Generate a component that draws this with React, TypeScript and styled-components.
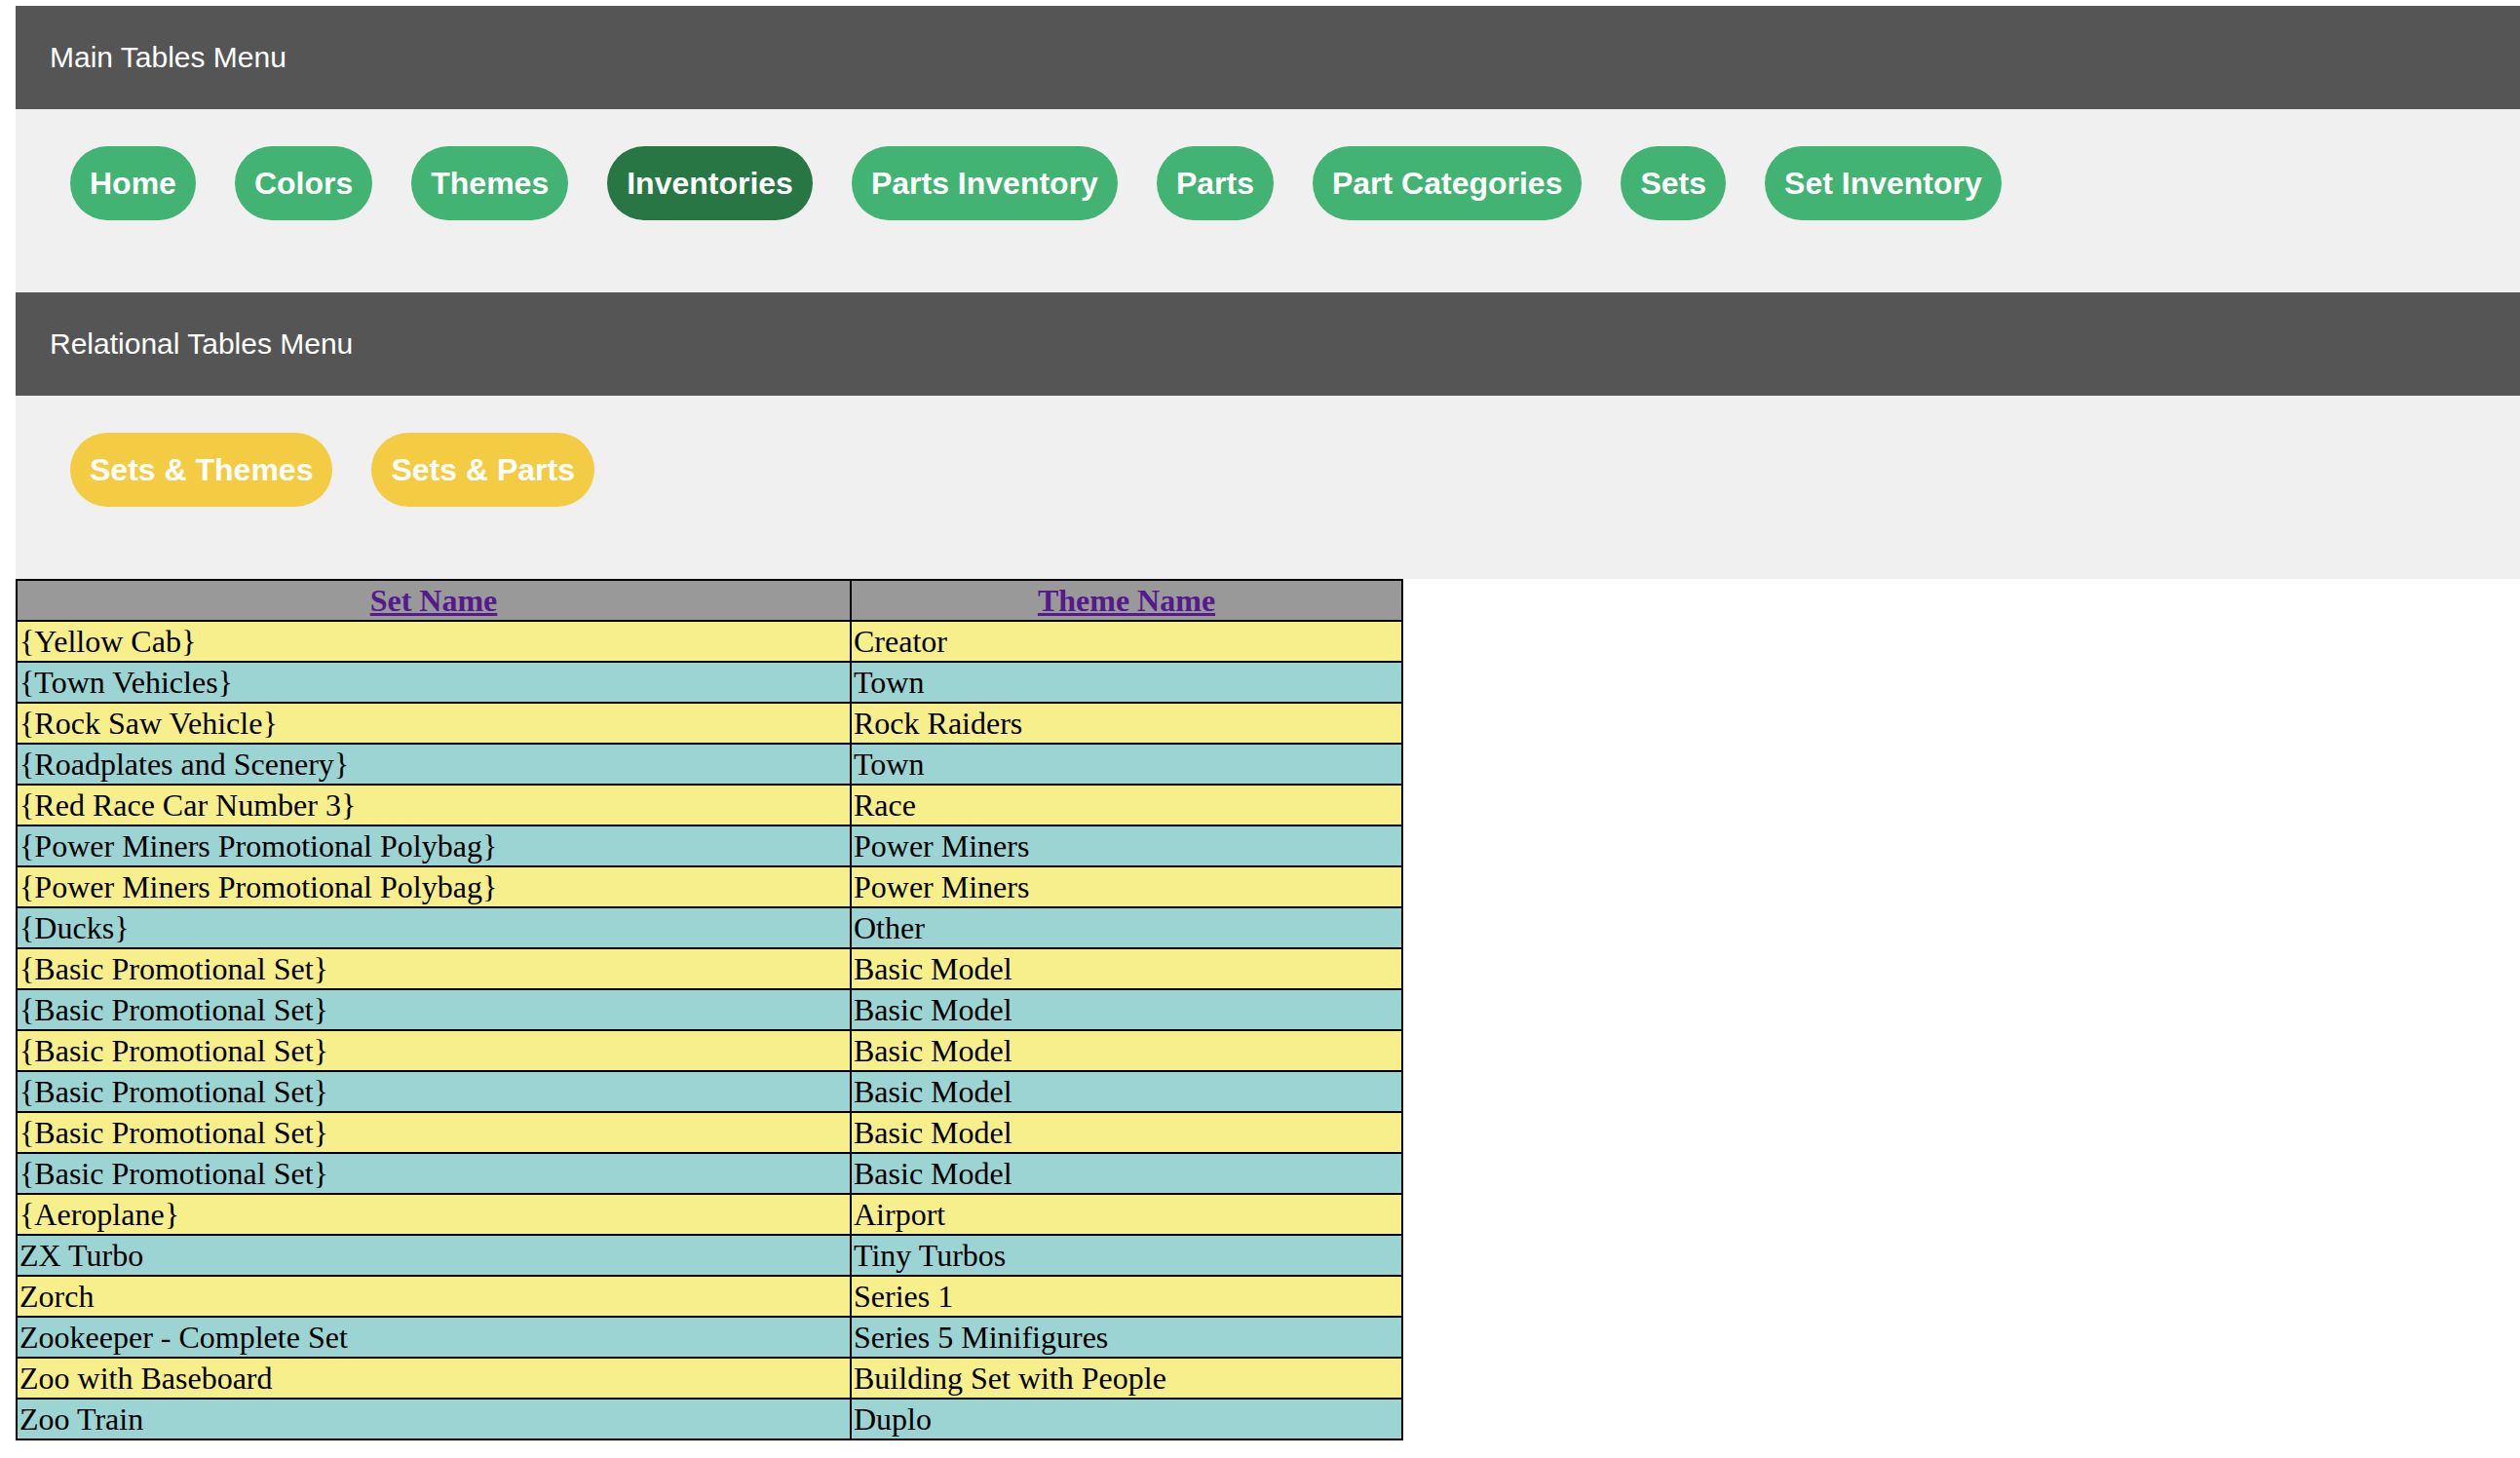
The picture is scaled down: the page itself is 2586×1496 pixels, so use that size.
import React from 'react'
import styled, { createGlobalStyle, css } from 'styled-components'

type Tone = 'green' | 'active' | 'yellow'

const mainLinks: { label: string; tone: Tone }[] = [
  { label: 'Home', tone: 'green' },
  { label: 'Colors', tone: 'green' },
  { label: 'Themes', tone: 'green' },
  { label: 'Inventories', tone: 'active' },
  { label: 'Parts Inventory', tone: 'green' },
  { label: 'Parts', tone: 'green' },
  { label: 'Part Categories', tone: 'green' },
  { label: 'Sets', tone: 'green' },
  { label: 'Set Inventory', tone: 'green' },
]

const relLinks = ['Sets & Themes', 'Sets & Parts']

const rows: [string, string][] = [
  ['{Yellow Cab}', 'Creator'],
  ['{Town Vehicles}', 'Town'],
  ['{Rock Saw Vehicle}', 'Rock Raiders'],
  ['{Roadplates and Scenery}', 'Town'],
  ['{Red Race Car Number 3}', 'Race'],
  ['{Power Miners Promotional Polybag}', 'Power Miners'],
  ['{Power Miners Promotional Polybag}', 'Power Miners'],
  ['{Ducks}', 'Other'],
  ['{Basic Promotional Set}', 'Basic Model'],
  ['{Basic Promotional Set}', 'Basic Model'],
  ['{Basic Promotional Set}', 'Basic Model'],
  ['{Basic Promotional Set}', 'Basic Model'],
  ['{Basic Promotional Set}', 'Basic Model'],
  ['{Basic Promotional Set}', 'Basic Model'],
  ['{Aeroplane}', 'Airport'],
  ['ZX Turbo', 'Tiny Turbos'],
  ['Zorch', 'Series 1'],
  ['Zookeeper - Complete Set', 'Series 5 Minifigures'],
  ['Zoo with Baseboard', 'Building Set with People'],
  ['Zoo Train', 'Duplo'],
]

const App = () => {
  return (
    <>
      <GlobalStyle />
      <Page>
        <MenuHeader>Main Tables Menu</MenuHeader>
        <MenuPanel>
          {mainLinks.map((l) => (
            <PillButton key={l.label} $tone={l.tone}>{l.label}</PillButton>
          ))}
        </MenuPanel>
        <MenuHeader>Relational Tables Menu</MenuHeader>
        <MenuPanel>
          {relLinks.map((l) => (
            <PillButton key={l} $tone="yellow">{l}</PillButton>
          ))}
        </MenuPanel>
        <DataTable>
          <thead>
            <tr>
              <HeadCell $w={850}><SortLink href="#">Set Name</SortLink></HeadCell>
              <HeadCell><SortLink href="#">Theme Name</SortLink></HeadCell>
            </tr>
          </thead>
          <tbody>
            {rows.map(([set, theme], i) => (
              <Row key={i} $alt={i % 2 === 1}>
                <Cell>{set}</Cell>
                <Cell>{theme}</Cell>
              </Row>
            ))}
          </tbody>
        </DataTable>
      </Page>
    </>
  )
}

const GlobalStyle = createGlobalStyle`
  html, body {
    margin: 0;
    padding: 0;
    background: #ffffff;
  }
  body {
    font-family: "Liberation Serif", "Times New Roman", serif;
  }
`

const Page = styled.div`
  padding: 6px 0 0 16px;
`

const MenuHeader = styled.div`
  display: flex;
  align-items: center;
  height: 106px;
  padding-left: 35px;
  background: #555555;
  color: #ffffff;
  font-family: "Liberation Sans", Arial, sans-serif;
  font-size: 30px;
`

const MenuPanel = styled.div`
  display: flex;
  gap: 40px;
  padding: 38px 0 74px 56px;
  background: #f0f0f0;
`

const tones = {
  green: '#43b373',
  active: '#297645',
  yellow: '#f4cc44',
}

const PillButton = styled.a<{ $tone: Tone }>(({ $tone }) => [
  css`
    display: inline-block;
    padding: 20px;
    line-height: 36px;
    border-radius: 999px;
    background: ${tones[$tone]};
    color: #ffffff;
    font-family: "Liberation Sans", Arial, sans-serif;
    font-size: 32px;
    font-weight: 700;
    text-decoration: none;
    white-space: nowrap;
  `,
])

const DataTable = styled.table`
  width: 1424px;
  border-collapse: collapse;
  border: 2px solid #000000;
  font-size: 32px;
`

const HeadCell = styled.th<{ $w?: number }>`
  ${({ $w }) => $w && css`width: ${$w}px;`}
  padding: 2px;
  line-height: 36px;
  border: 2px solid #000000;
  background: #999999;
  text-align: center;
  font-weight: 700;
`

const SortLink = styled.a`
  color: #551a8b;
  text-decoration: underline;
`

const Row = styled.tr<{ $alt: boolean }>`
  background: ${({ $alt }) => ($alt ? '#9cd3d3' : '#f7ef8b')};
`

const Cell = styled.td`
  padding: 2px;
  line-height: 36px;
  border: 2px solid #000000;
  color: #000000;
  white-space: nowrap;
`

export default App
